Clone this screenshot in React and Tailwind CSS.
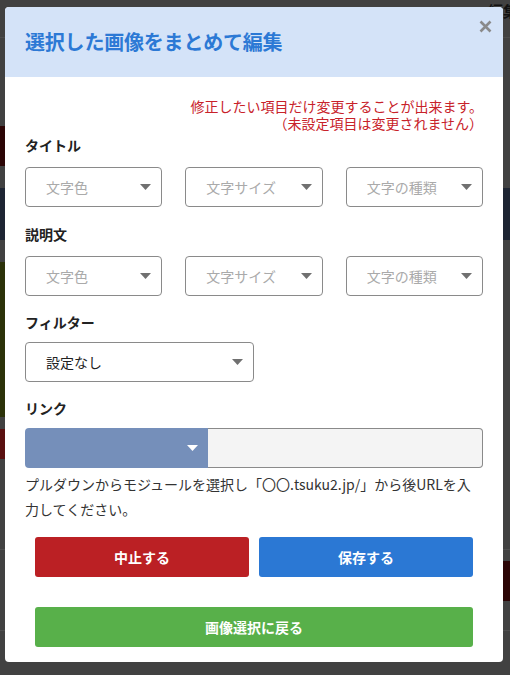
import React from "react";

const font = { fontFamily: '"Noto Sans CJK JP", "Noto Sans", sans-serif' };

function Caret({ className }) {
  return (
    <svg width="11" height="6" viewBox="0 0 11 6" className={className}>
      <path d="M0 0h11L5.5 6z" fill="currentColor" />
    </svg>
  );
}

function FakeSelect({ label, dark, className = "" }) {
  return (
    <div
      className={
        "flex h-10 items-center justify-between rounded-[4px] border border-[#8a8a8a] bg-white pl-5 pr-[10px] text-[14px] " +
        (dark ? "text-[#222]" : "text-[#aaa]") +
        " " +
        className
      }
    >
      <span>{label}</span>
      <Caret className="text-[#707070]" />
    </div>
  );
}

function Background() {
  return (
    <div className="flex h-[675px] flex-col bg-[#414141]">
      <div className="flex h-[38px] shrink-0 justify-end border-b border-[#4c4c4c]">
        <span className="mr-[-8px] text-[15px] font-bold leading-[22px] text-[#111]">・ 編集</span>
      </div>
      <div className="mt-[88px] flex h-[40px] shrink-0">
        <div className="w-[40px] bg-[#2c0505]" />
      </div>
      <div className="mt-[22px] h-[52px] shrink-0 bg-[#1e2533]" />
      <div className="mt-[22px] flex h-[155px] shrink-0">
        <div className="w-[40px] bg-[#2c3209]" />
      </div>
      <div className="mt-[12px] flex h-[30px] shrink-0">
        <div className="w-[5px] bg-[#5a1010]" />
      </div>
      <div className="mt-[90px] h-[50px] shrink-0 border-t border-[#4f4f4f]">
        <div className="mt-[11px] flex h-[40px] justify-end">
          <div className="w-[40px] bg-[#2c0506]" />
        </div>
      </div>
      <div className="mt-[31px] shrink-0 border-t border-[#4f4f4f]" />
    </div>
  );
}

export default function App() {
  return (
    <div className="relative h-[675px] w-[510px] overflow-hidden" style={font}>
      <Background />

      <div className="absolute left-[5px] top-[7px] w-[498px] overflow-hidden rounded-[4px] bg-white">
        <div className="relative flex h-[70px] items-center bg-[#d4e3f8] pl-5">
          <h2 className="text-[20px] font-bold tracking-[-0.2px] text-[#2c79d5]">
            選択した画像をまとめて編集
          </h2>
          <button className="absolute right-[11px] top-[13px] text-[#8a8a8a]">
            <svg width="13" height="13" viewBox="0 0 13 13">
              <path d="M1.5 1.5l10 10M11.5 1.5l-10 10" stroke="currentColor" strokeWidth="2.6" />
            </svg>
          </button>
        </div>

        <div className="px-5 pb-[15px] pt-[21px]">
          <p className="text-right text-[14px] leading-[17px] text-[#c8222a]">
            修正したい項目だけ変更することが出来ます。
            <br />
            （未設定項目は変更されません）
          </p>

          <div className="mt-[3px] text-[14px] font-bold leading-[20px] text-[#222]">タイトル</div>
          <div className="mt-[12px] grid grid-cols-3 gap-[23px]">
            <FakeSelect label="文字色" />
            <FakeSelect label="文字サイズ" />
            <FakeSelect label="文字の種類" />
          </div>

          <div className="mt-[17px] text-[14px] font-bold leading-[20px] text-[#222]">説明文</div>
          <div className="mt-[12px] grid grid-cols-3 gap-[23px]">
            <FakeSelect label="文字色" />
            <FakeSelect label="文字サイズ" />
            <FakeSelect label="文字の種類" />
          </div>

          <div className="mt-[16px] text-[14px] font-bold leading-[20px] text-[#222]">フィルター</div>
          <FakeSelect label="設定なし" dark className="mt-[10px] w-[229px]" />

          <div className="mt-[16px] text-[14px] font-bold leading-[20px] text-[#222]">リンク</div>
          <div className="mt-[10px] flex h-10">
            <div className="flex w-[183px] items-center justify-end rounded-l-[4px] bg-[#758fba] pr-[10px]">
              <Caret className="text-white" />
            </div>
            <input
              className="flex-1 rounded-r-[4px] border border-l-0 border-[#8a8a8a] bg-[#f4f4f4] px-3 text-[14px] outline-none"
              defaultValue=""
            />
          </div>

          <p className="mt-[4px] text-[14px] leading-[25px] text-[#333]">
            プルダウンからモジュールを選択し「〇〇.tsuku2.jp/」から後URLを入
            <br />
            力してください。
          </p>

          <div className="mt-[15px] flex gap-[10px] px-[10px]">
            <button className="h-10 flex-1 rounded-[3px] bg-[#bb2024] text-[14px] font-bold text-white">
              中止する
            </button>
            <button className="h-10 flex-1 rounded-[3px] bg-[#2b78d4] text-[14px] font-bold text-white">
              保存する
            </button>
          </div>

          <div className="mt-[30px] px-[10px]">
            <button className="h-10 w-full rounded-[3px] bg-[#58b04a] text-[14px] font-bold text-white">
              画像選択に戻る
            </button>
          </div>
        </div>
      </div>
    </div>
  );
}
